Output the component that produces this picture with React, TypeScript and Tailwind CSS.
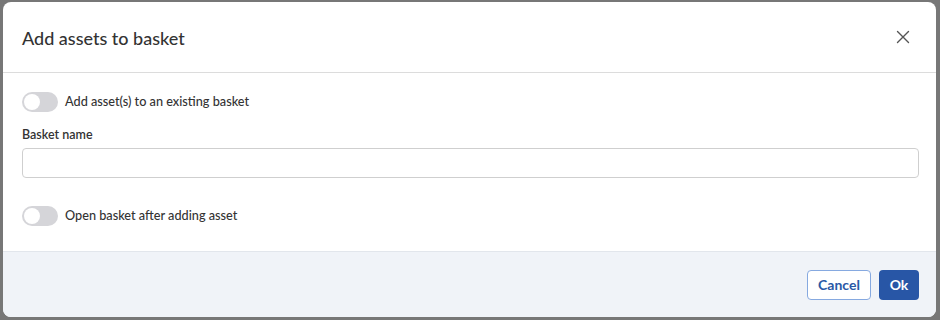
import React from "react";

function Toggle() {
  return (
    <div className="w-[36px] h-[20px] rounded-full bg-[#d5d5d9] relative shrink-0">
      <div className="absolute left-[2px] top-[2px] w-[16px] h-[16px] rounded-full bg-white" />
    </div>
  );
}

export default function App() {
  return (
    <div
      className="w-[940px] h-[320px] bg-[#777777] pt-[2px] pl-[3px] pr-[4px] pb-[3px]"
      style={{ fontFamily: 'Lato, "Noto Sans", sans-serif' }}
    >
      <div className="w-full h-full bg-white rounded-[8px] overflow-hidden flex flex-col">
        <div className="h-[71px] flex items-center justify-between pl-[19px] pr-[26px] border-b border-[#dcdcdc] shrink-0">
          <div className="text-[18px] font-medium text-[#333333] leading-none mt-[2px]">Add assets to basket</div>
          <svg width="14" height="14" viewBox="0 0 14 14" className="text-[#555]">
            <path d="M1.5 1.5 L12.5 12.5 M12.5 1.5 L1.5 12.5" stroke="currentColor" strokeWidth="1.4" strokeLinecap="round" />
          </svg>
        </div>
        <div className="flex-1 pl-[19px] pr-[17px] pt-[19px] flex flex-col">
          <div className="flex items-center gap-[7px] h-[20px]">
            <Toggle />
            <span className="text-[12.7px] font-medium text-[#333]">Add asset(s) to an existing basket</span>
          </div>
          <div className="mt-[15px] text-[12.5px] font-semibold text-[#333] leading-[16px]">Basket name</div>
          <input className="mt-[5px] h-[30px] w-full border border-[#cfcfcf] rounded-[4px] outline-none" />
          <div className="flex items-center gap-[7px] h-[20px] mt-[28px]">
            <Toggle />
            <span className="text-[12.7px] font-medium text-[#333]">Open basket after adding asset</span>
          </div>
        </div>
        <div className="h-[66px] bg-[#f0f3f8] border-t border-[#e2e6ec] flex items-center justify-end gap-[8px] pr-[17px] shrink-0">
          <button className="h-[30px] w-[64px] rounded-[4px] border border-[#86a9e0] bg-white text-[#2a58a6] text-[14px] font-bold">
            Cancel
          </button>
          <button className="h-[30px] w-[40px] rounded-[4px] bg-[#2856a6] text-white text-[14px] font-bold">
            Ok
          </button>
        </div>
      </div>
    </div>
  );
}
